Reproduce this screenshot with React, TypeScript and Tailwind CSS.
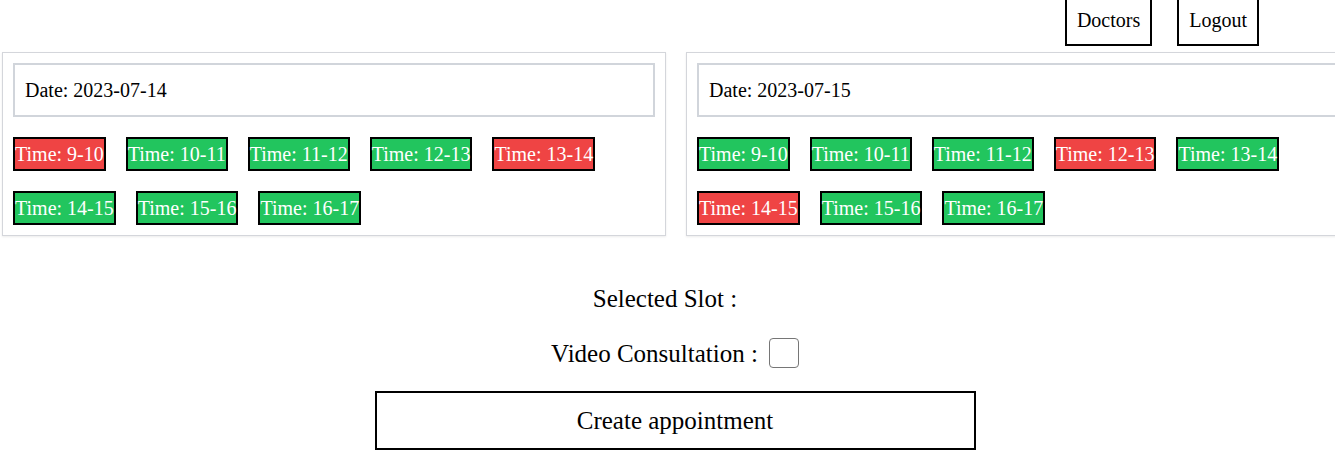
import React from "react";

type Slot = { label: string; booked: boolean };

const days: { date: string; slots: Slot[] }[] = [
  {
    date: "2023-07-14",
    slots: [
      { label: "9-10", booked: true },
      { label: "10-11", booked: false },
      { label: "11-12", booked: false },
      { label: "12-13", booked: false },
      { label: "13-14", booked: true },
      { label: "14-15", booked: false },
      { label: "15-16", booked: false },
      { label: "16-17", booked: false },
    ],
  },
  {
    date: "2023-07-15",
    slots: [
      { label: "9-10", booked: false },
      { label: "10-11", booked: false },
      { label: "11-12", booked: false },
      { label: "12-13", booked: true },
      { label: "13-14", booked: false },
      { label: "14-15", booked: true },
      { label: "15-16", booked: false },
      { label: "16-17", booked: false },
    ],
  },
];

export default function App() {
  return (
    <div
      className="w-full overflow-hidden bg-white text-black"
      style={{ fontFamily: '"Liberation Serif", "Times New Roman", serif' }}
    >
      <div className="w-[1350px]">
        <header className="flex justify-end gap-[25px] pr-[91px]">
          <button className="-mt-[6px] border-2 border-black px-[10px] py-[9px] text-[20px] leading-[30px]">
            Doctors
          </button>
          <button className="-mt-[6px] border-2 border-black px-[10px] py-[9px] text-[20px] leading-[30px]">
            Logout
          </button>
        </header>

        <div className="mt-[6px] flex gap-[20px] pl-[2px]">
          {days.map((d) => (
            <div
              key={d.date}
              className="w-[664px] shrink-0 border border-[#d4d6db] p-[10px] shadow-[0_1px_2px_rgba(0,0,0,0.08)]"
            >
              <div className="border-2 border-[#d1d5db] p-[10px] text-[20px] leading-[30px]">
                Date: {d.date}
              </div>
              <div className="mt-[20px] flex flex-wrap gap-[20px]">
                {d.slots.map((s) => (
                  <div
                    key={s.label}
                    className={`border-2 border-black text-[20px] leading-[30px] text-white ${
                      s.booked ? "bg-[#ef4444]" : "bg-[#22c55e]"
                    }`}
                  >
                    Time: {s.label}
                  </div>
                ))}
              </div>
            </div>
          ))}
        </div>

        <div className="mt-[45px] flex justify-center text-[25px] leading-[36px]">
          <span>Selected Slot :</span>
          <span className="inline-block w-[20px]"></span>
        </div>

        <div className="mt-[19px] flex items-center justify-center text-[25px] leading-[36px]">
          <span>Video Consultation :</span>
          <input
            type="checkbox"
            className="ml-[11px] -mt-[3px] h-[30px] w-[30px] appearance-none rounded-[4px] border border-[#767676] bg-white"
          />
        </div>

        <div className="mt-[19px] flex justify-center">
          <button className="flex h-[59px] w-[601px] items-center justify-center border-2 border-black text-[25px] leading-[36px]">
            Create appointment
          </button>
        </div>
      </div>
    </div>
  );
}
